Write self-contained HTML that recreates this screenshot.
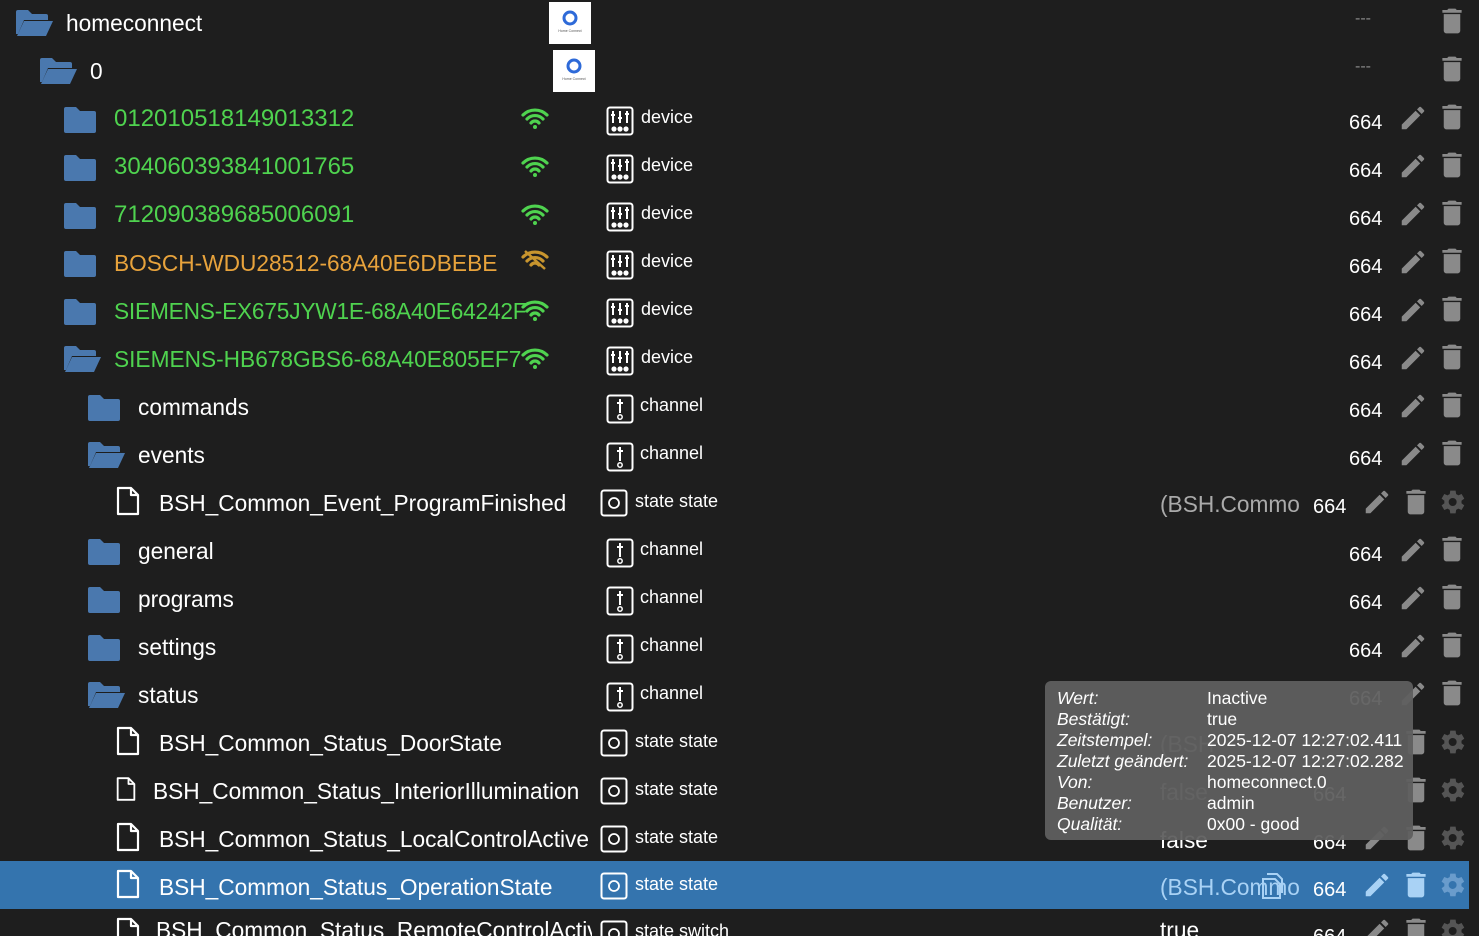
<!DOCTYPE html>
<html><head><meta charset="utf-8"><style>
html,body{margin:0;width:1479px;height:936px;overflow:hidden}
body{background:#1e1e1e;font-family:"Liberation Sans",sans-serif;color:#fff;position:relative}
.r{position:absolute;left:0;width:1469px;height:48px}
.t{position:absolute;top:10px;font-size:22.7px;white-space:nowrap;line-height:26px}
.g{color:#4fd34f}.o{color:#e8a33c}
.ic{position:absolute}
.ty{position:absolute;top:12px;font-size:18px;line-height:22px;white-space:nowrap}
.n{position:absolute;top:16px;font-size:20px;line-height:22px}
.v{position:absolute;top:11px;left:1160px;font-size:22.7px;color:#aaa;white-space:nowrap}
.sel{background:#3474ae}
.tip{position:absolute;left:1045px;top:681px;width:368px;height:159px;background:rgba(95,95,95,0.95);border-radius:6px;font-size:17.5px;line-height:21px}
.tip div{position:absolute;left:12px;white-space:nowrap}
.tip i{display:inline-block;width:150px}
</style></head><body>
<svg width="0" height="0" style="position:absolute">
<defs>
<symbol id="fo" viewBox="0 0 40 30"><path d="M2 4q0-2 2-2h10l4 4h14q2 0 2 2v4H10l-6 14H2z" fill="#4a78ae"/><path d="M10 13h29l-7 15H3z" fill="#4a78ae"/></symbol>
<symbol id="fc" viewBox="0 0 36 30"><path d="M2 4q0-2 2-2h10l4 4h14q2 0 2 2v18q0 2-2 2H4q-2 0-2-2z" fill="#4a78ae"/></symbol>
<symbol id="fi" viewBox="0 0 24 30"><path d="M2 2h13l7 7v19H2z M15 2v7h7" fill="none" stroke="#fff" stroke-width="2.2" stroke-linejoin="round"/></symbol>
<symbol id="wf" viewBox="0 0 30 24"><path d="M3 9a17 17 0 0 1 24 0M7 13a11 11 0 0 1 16 0M11 17a5 5 0 0 1 8 0" fill="none" stroke="#4fd34f" stroke-width="3.2" stroke-linecap="round"/><circle cx="15" cy="21" r="2" fill="#4fd34f"/></symbol>
<symbol id="dv" viewBox="0 0 28 30"><rect x="1.5" y="1.5" width="25" height="27" rx="2.5" fill="none" stroke="#fff" stroke-width="2"/><path d="M7 5v12M14 5v12M21 5v12M5 9h4M12 12h4M19 8h4" stroke="#fff" stroke-width="2"/><circle cx="8" cy="23" r="2.6" fill="#fff"/><circle cx="14" cy="23" r="2.6" fill="#fff"/><circle cx="20" cy="23" r="2.6" fill="#fff"/></symbol>
<symbol id="ch" viewBox="0 0 28 30"><rect x="1.5" y="1.5" width="25" height="27" rx="2.5" fill="none" stroke="#fff" stroke-width="2"/><path d="M14 5v14M11 9h6" stroke="#fff" stroke-width="2"/><circle cx="14" cy="23" r="2.2" fill="none" stroke="#fff" stroke-width="1.5"/></symbol>
<symbol id="st" viewBox="0 0 28 30"><rect x="1.5" y="2.5" width="25" height="25" rx="2.5" fill="none" stroke="#fff" stroke-width="2"/><circle cx="14" cy="15" r="5" fill="none" stroke="#fff" stroke-width="1.8"/></symbol>
<symbol id="pe" viewBox="0 0 24 24"><path d="M3 17.3V21h3.7L17.8 9.9l-3.7-3.7zM20.7 7a1 1 0 0 0 0-1.4l-2.3-2.3a1 1 0 0 0-1.4 0l-1.8 1.8 3.7 3.7z" fill="#8a8a8a"/></symbol>
<symbol id="tr" viewBox="4 2 16 20"><path d="M6 19c0 1.1.9 2 2 2h8c1.1 0 2-.9 2-2V7H6zM19 4h-3.5l-1-1h-5l-1 1H5v2h14z" fill="#8a8a8a"/></symbol>
<symbol id="ge" viewBox="0 0 24 24"><path d="M19.1 12.9a7 7 0 0 0 0-1.8l2.1-1.6-2-3.5-2.5 1a7 7 0 0 0-1.6-.9L14.7 3.5h-4l-.4 2.6a7 7 0 0 0-1.6.9l-2.5-1-2 3.5 2.1 1.6a7 7 0 0 0 0 1.8l-2.1 1.6 2 3.5 2.5-1a7 7 0 0 0 1.6.9l.4 2.6h4l.4-2.6a7 7 0 0 0 1.6-.9l2.5 1 2-3.5zM12.5 15a3 3 0 1 1 0-6 3 3 0 0 1 0 6z" fill="#555"/></symbol>
</defs></svg>

<div class="r" style="top:0">
<svg class="ic" style="left:14px;top:8px" width="40" height="30"><use href="#fo"/></svg>
<div class="t" style="left:66px">homeconnect</div>
<div class="ic" style="left:549px;top:2px;width:42px;height:42px;background:#fff"><svg width="42" height="42"><circle cx="21" cy="16" r="6" fill="none" stroke="#2e6ad8" stroke-width="3"/><text x="21" y="30" font-size="3.5" text-anchor="middle" fill="#555">Home Connect</text></svg></div>
<div class="n" style="left:1355px;top:8px;color:#888;font-size:16px">---</div>
<svg class="ic" style="left:1441px;top:7px" width="22" height="28"><use href="#tr"/></svg>
</div>
<div class="r" style="top:48px">
<svg class="ic" style="left:38px;top:8px" width="40" height="30"><use href="#fo"/></svg>
<div class="t" style="left:90px">0</div>
<div class="ic" style="left:553px;top:2px;width:42px;height:42px;background:#fff"><svg width="42" height="42"><circle cx="21" cy="16" r="6" fill="none" stroke="#2e6ad8" stroke-width="3"/><text x="21" y="30" font-size="3.5" text-anchor="middle" fill="#555">Home Connect</text></svg></div>
<div class="n" style="left:1355px;top:8px;color:#888;font-size:16px">---</div>
<svg class="ic" style="left:1441px;top:7px" width="22" height="28"><use href="#tr"/></svg>
</div>

<div class="r" style="top:96px"><svg class="ic" style="left:62px;top:9px" width="36" height="30"><use href="#fc"/></svg><div class="t g" style="left:114px;font-size:24px">012010518149013312</div><svg class="ic" style="left:520px;top:10px" width="30" height="24"><use href="#wf"/></svg><svg class="ic" style="left:606px;top:10px" width="28" height="30"><use href="#dv"/></svg><div class="ty" style="left:641px;top:10px">device</div><div class="n" style="left:1349px">664</div><svg class="ic" style="left:1398px;top:7px" width="30" height="30"><use href="#pe"/></svg><svg class="ic" style="left:1441px;top:7px" width="22" height="28"><use href="#tr"/></svg></div>
<div class="r" style="top:144px"><svg class="ic" style="left:62px;top:9px" width="36" height="30"><use href="#fc"/></svg><div class="t g" style="left:114px;font-size:24px">304060393841001765</div><svg class="ic" style="left:520px;top:10px" width="30" height="24"><use href="#wf"/></svg><svg class="ic" style="left:606px;top:10px" width="28" height="30"><use href="#dv"/></svg><div class="ty" style="left:641px;top:10px">device</div><div class="n" style="left:1349px">664</div><svg class="ic" style="left:1398px;top:7px" width="30" height="30"><use href="#pe"/></svg><svg class="ic" style="left:1441px;top:7px" width="22" height="28"><use href="#tr"/></svg></div>
<div class="r" style="top:192px"><svg class="ic" style="left:62px;top:9px" width="36" height="30"><use href="#fc"/></svg><div class="t g" style="left:114px;font-size:24px">712090389685006091</div><svg class="ic" style="left:520px;top:10px" width="30" height="24"><use href="#wf"/></svg><svg class="ic" style="left:606px;top:10px" width="28" height="30"><use href="#dv"/></svg><div class="ty" style="left:641px;top:10px">device</div><div class="n" style="left:1349px">664</div><svg class="ic" style="left:1398px;top:7px" width="30" height="30"><use href="#pe"/></svg><svg class="ic" style="left:1441px;top:7px" width="22" height="28"><use href="#tr"/></svg></div>
<div class="r" style="top:240px"><svg class="ic" style="left:62px;top:9px" width="36" height="30"><use href="#fc"/></svg><div class="t o" style="left:114px">BOSCH-WDU28512-68A40E6DBEBE</div><svg class="ic" style="left:520px;top:8px" width="30" height="24"><path d="M3 9a17 17 0 0 1 24 0M7 13a11 11 0 0 1 16 0M11 17a5 5 0 0 1 8 0" fill="none" stroke="#c8952e" stroke-width="3.2" stroke-linecap="round"/><path d="M5 3l20 18" stroke="#c8952e" stroke-width="2.5"/></svg><svg class="ic" style="left:606px;top:10px" width="28" height="30"><use href="#dv"/></svg><div class="ty" style="left:641px;top:10px">device</div><div class="n" style="left:1349px">664</div><svg class="ic" style="left:1398px;top:7px" width="30" height="30"><use href="#pe"/></svg><svg class="ic" style="left:1441px;top:7px" width="22" height="28"><use href="#tr"/></svg></div>
<div class="r" style="top:288px"><svg class="ic" style="left:62px;top:9px" width="36" height="30"><use href="#fc"/></svg><div class="t g" style="left:114px;letter-spacing:-0.2px">SIEMENS-EX675JYW1E-68A40E64242F</div><svg class="ic" style="left:520px;top:10px" width="30" height="24"><use href="#wf"/></svg><svg class="ic" style="left:606px;top:10px" width="28" height="30"><use href="#dv"/></svg><div class="ty" style="left:641px;top:10px">device</div><div class="n" style="left:1349px">664</div><svg class="ic" style="left:1398px;top:7px" width="30" height="30"><use href="#pe"/></svg><svg class="ic" style="left:1441px;top:7px" width="22" height="28"><use href="#tr"/></svg></div>
<div class="r" style="top:336px"><svg class="ic" style="left:62px;top:8px" width="40" height="30"><use href="#fo"/></svg><div class="t g" style="left:114px">SIEMENS-HB678GBS6-68A40E805EF7</div><svg class="ic" style="left:520px;top:10px" width="30" height="24"><use href="#wf"/></svg><svg class="ic" style="left:606px;top:10px" width="28" height="30"><use href="#dv"/></svg><div class="ty" style="left:641px;top:10px">device</div><div class="n" style="left:1349px">664</div><svg class="ic" style="left:1398px;top:7px" width="30" height="30"><use href="#pe"/></svg><svg class="ic" style="left:1441px;top:7px" width="22" height="28"><use href="#tr"/></svg></div>

<div class="r" style="top:384px"><svg class="ic" style="left:86px;top:9px" width="36" height="30"><use href="#fc"/></svg><div class="t" style="left:138px">commands</div><svg class="ic" style="left:606px;top:10px" width="28" height="30"><use href="#ch"/></svg><div class="ty" style="left:640px;top:10px">channel</div><div class="n" style="left:1349px">664</div><svg class="ic" style="left:1398px;top:7px" width="30" height="30"><use href="#pe"/></svg><svg class="ic" style="left:1441px;top:7px" width="22" height="28"><use href="#tr"/></svg></div>
<div class="r" style="top:432px"><svg class="ic" style="left:86px;top:8px" width="40" height="30"><use href="#fo"/></svg><div class="t" style="left:138px">events</div><svg class="ic" style="left:606px;top:10px" width="28" height="30"><use href="#ch"/></svg><div class="ty" style="left:640px;top:10px">channel</div><div class="n" style="left:1349px">664</div><svg class="ic" style="left:1398px;top:7px" width="30" height="30"><use href="#pe"/></svg><svg class="ic" style="left:1441px;top:7px" width="22" height="28"><use href="#tr"/></svg></div>
<div class="r" style="top:480px"><svg class="ic" style="left:116px;top:6px" width="24" height="30"><use href="#fi"/></svg><div class="t" style="left:159px">BSH_Common_Event_ProgramFinished</div><svg class="ic" style="left:600px;top:8px" width="28" height="30"><use href="#st"/></svg><div class="ty" style="left:635px;top:10px">state state</div><div class="v">(BSH.Commo</div><div class="n" style="left:1313px">664</div><svg class="ic" style="left:1362px;top:7px" width="30" height="30"><use href="#pe"/></svg><svg class="ic" style="left:1405px;top:8px" width="22" height="28"><use href="#tr"/></svg><svg class="ic" style="left:1436px;top:6px" width="32" height="32"><use href="#ge"/></svg></div>
<div class="r" style="top:528px"><svg class="ic" style="left:86px;top:9px" width="36" height="30"><use href="#fc"/></svg><div class="t" style="left:138px">general</div><svg class="ic" style="left:606px;top:10px" width="28" height="30"><use href="#ch"/></svg><div class="ty" style="left:640px;top:10px">channel</div><div class="n" style="left:1349px">664</div><svg class="ic" style="left:1398px;top:7px" width="30" height="30"><use href="#pe"/></svg><svg class="ic" style="left:1441px;top:7px" width="22" height="28"><use href="#tr"/></svg></div>
<div class="r" style="top:576px"><svg class="ic" style="left:86px;top:9px" width="36" height="30"><use href="#fc"/></svg><div class="t" style="left:138px">programs</div><svg class="ic" style="left:606px;top:10px" width="28" height="30"><use href="#ch"/></svg><div class="ty" style="left:640px;top:10px">channel</div><div class="n" style="left:1349px">664</div><svg class="ic" style="left:1398px;top:7px" width="30" height="30"><use href="#pe"/></svg><svg class="ic" style="left:1441px;top:7px" width="22" height="28"><use href="#tr"/></svg></div>
<div class="r" style="top:624px"><svg class="ic" style="left:86px;top:9px" width="36" height="30"><use href="#fc"/></svg><div class="t" style="left:138px">settings</div><svg class="ic" style="left:606px;top:10px" width="28" height="30"><use href="#ch"/></svg><div class="ty" style="left:640px;top:10px">channel</div><div class="n" style="left:1349px">664</div><svg class="ic" style="left:1398px;top:7px" width="30" height="30"><use href="#pe"/></svg><svg class="ic" style="left:1441px;top:7px" width="22" height="28"><use href="#tr"/></svg></div>
<div class="r" style="top:672px"><svg class="ic" style="left:86px;top:8px" width="40" height="30"><use href="#fo"/></svg><div class="t" style="left:138px">status</div><svg class="ic" style="left:606px;top:10px" width="28" height="30"><use href="#ch"/></svg><div class="ty" style="left:640px;top:10px">channel</div><div class="n" style="left:1349px">664</div><svg class="ic" style="left:1398px;top:7px" width="30" height="30"><use href="#pe"/></svg><svg class="ic" style="left:1441px;top:7px" width="22" height="28"><use href="#tr"/></svg></div>

<div class="r" style="top:720px"><svg class="ic" style="left:116px;top:6px" width="24" height="30"><use href="#fi"/></svg><div class="t" style="left:159px">BSH_Common_Status_DoorState</div><svg class="ic" style="left:600px;top:8px" width="28" height="30"><use href="#st"/></svg><div class="ty" style="left:635px;top:10px">state state</div><div class="v">(BSH</div><svg class="ic" style="left:1405px;top:8px" width="22" height="28"><use href="#tr"/></svg><svg class="ic" style="left:1436px;top:6px" width="32" height="32"><use href="#ge"/></svg></div>
<div class="r" style="top:768px"><svg class="ic" style="left:116px;top:8px" width="20" height="26"><use href="#fi"/></svg><div class="t" style="left:153px;width:440px;overflow:hidden">BSH_Common_Status_InteriorIllumination</div><svg class="ic" style="left:600px;top:8px" width="28" height="30"><use href="#st"/></svg><div class="ty" style="left:635px;top:10px">state state</div><div class="v">false</div><div class="n" style="left:1313px">664</div><svg class="ic" style="left:1405px;top:8px" width="22" height="28"><use href="#tr"/></svg><svg class="ic" style="left:1436px;top:6px" width="32" height="32"><use href="#ge"/></svg></div>
<div class="r" style="top:816px"><svg class="ic" style="left:116px;top:6px" width="24" height="30"><use href="#fi"/></svg><div class="t" style="left:159px">BSH_Common_Status_LocalControlActive</div><svg class="ic" style="left:600px;top:8px" width="28" height="30"><use href="#st"/></svg><div class="ty" style="left:635px;top:10px">state state</div><div class="v" style="color:#fff">false</div><div class="n" style="left:1313px">664</div><svg class="ic" style="left:1362px;top:7px" width="30" height="30"><use href="#pe"/></svg><svg class="ic" style="left:1405px;top:8px" width="22" height="28"><use href="#tr"/></svg><svg class="ic" style="left:1436px;top:6px" width="32" height="32"><use href="#ge"/></svg></div>
<div class="r sel" style="top:861px;height:48px"><svg class="ic" style="left:116px;top:8px" width="24" height="30"><use href="#fi"/></svg><div class="t" style="left:159px;top:13px">BSH_Common_Status_OperationState</div><svg class="ic" style="left:600px;top:10px" width="28" height="30"><use href="#st"/></svg><div class="ty" style="left:635px;top:12px">state state</div><div class="v" style="color:#a9d2f5;top:13px">(BSH.Commo</div><svg class="ic" style="left:1258px;top:10px" width="26" height="30"><path d="M5 8h12l5 5v14H5z M9 3h10l5 5v14" fill="none" stroke="#a9d2f5" stroke-width="2"/></svg><div class="n" style="left:1313px;top:18px">664</div><svg class="ic" style="left:1362px;top:9px" width="30" height="30"><path d="M3 17.3V21h3.7L17.8 9.9l-3.7-3.7zM20.7 7a1 1 0 0 0 0-1.4l-2.3-2.3a1 1 0 0 0-1.4 0l-1.8 1.8 3.7 3.7z" transform="scale(1.25)" fill="#a9d2f5"/></svg><svg class="ic" style="left:1405px;top:10px" width="22" height="28" viewBox="4 2 16 20"><path d="M6 19c0 1.1.9 2 2 2h8c1.1 0 2-.9 2-2V7H6zM19 4h-3.5l-1-1h-5l-1 1H5v2h14z" fill="#a9d2f5"/></svg><svg class="ic" style="left:1436px;top:8px" width="32" height="32"><path d="M19.1 12.9a7 7 0 0 0 0-1.8l2.1-1.6-2-3.5-2.5 1a7 7 0 0 0-1.6-.9L14.7 3.5h-4l-.4 2.6a7 7 0 0 0-1.6.9l-2.5-1-2 3.5 2.1 1.6a7 7 0 0 0 0 1.8l-2.1 1.6 2 3.5 2.5-1a7 7 0 0 0 1.6.9l.4 2.6h4l.4-2.6a7 7 0 0 0 1.6-.9l2.5 1 2-3.5zM12.5 15a3 3 0 1 1 0-6 3 3 0 0 1 0 6z" transform="scale(1.33)" fill="#6a9ccc"/></svg></div>
<div class="r" style="top:909px;height:27px;overflow:hidden"><svg class="ic" style="left:116px;top:8px" width="24" height="30"><use href="#fi"/></svg><div class="t" style="left:156px;top:8px;width:436px;overflow:hidden">BSH_Common_Status_RemoteControlActive</div><svg class="ic" style="left:600px;top:10px" width="28" height="30"><use href="#st"/></svg><div class="ty" style="left:635px;top:11px">state switch</div><div class="v" style="color:#fff;top:8px">true</div><div class="n" style="left:1313px;top:17px">664</div><svg class="ic" style="left:1362px;top:7px" width="30" height="30"><use href="#pe"/></svg><svg class="ic" style="left:1405px;top:8px" width="22" height="28"><use href="#tr"/></svg><svg class="ic" style="left:1436px;top:6px" width="32" height="32"><use href="#ge"/></svg></div>

<div class="tip">
<div style="top:7px"><i>Wert:</i>Inactive</div>
<div style="top:28px"><i>Bestätigt:</i>true</div>
<div style="top:49px"><i>Zeitstempel:</i>2025-12-07 12:27:02.411</div>
<div style="top:70px"><i>Zuletzt geändert:</i>2025-12-07 12:27:02.282</div>
<div style="top:91px"><i>Von:</i>homeconnect.0</div>
<div style="top:112px"><i>Benutzer:</i>admin</div>
<div style="top:133px"><i>Qualität:</i>0x00 - good</div>
</div>
</body></html>
